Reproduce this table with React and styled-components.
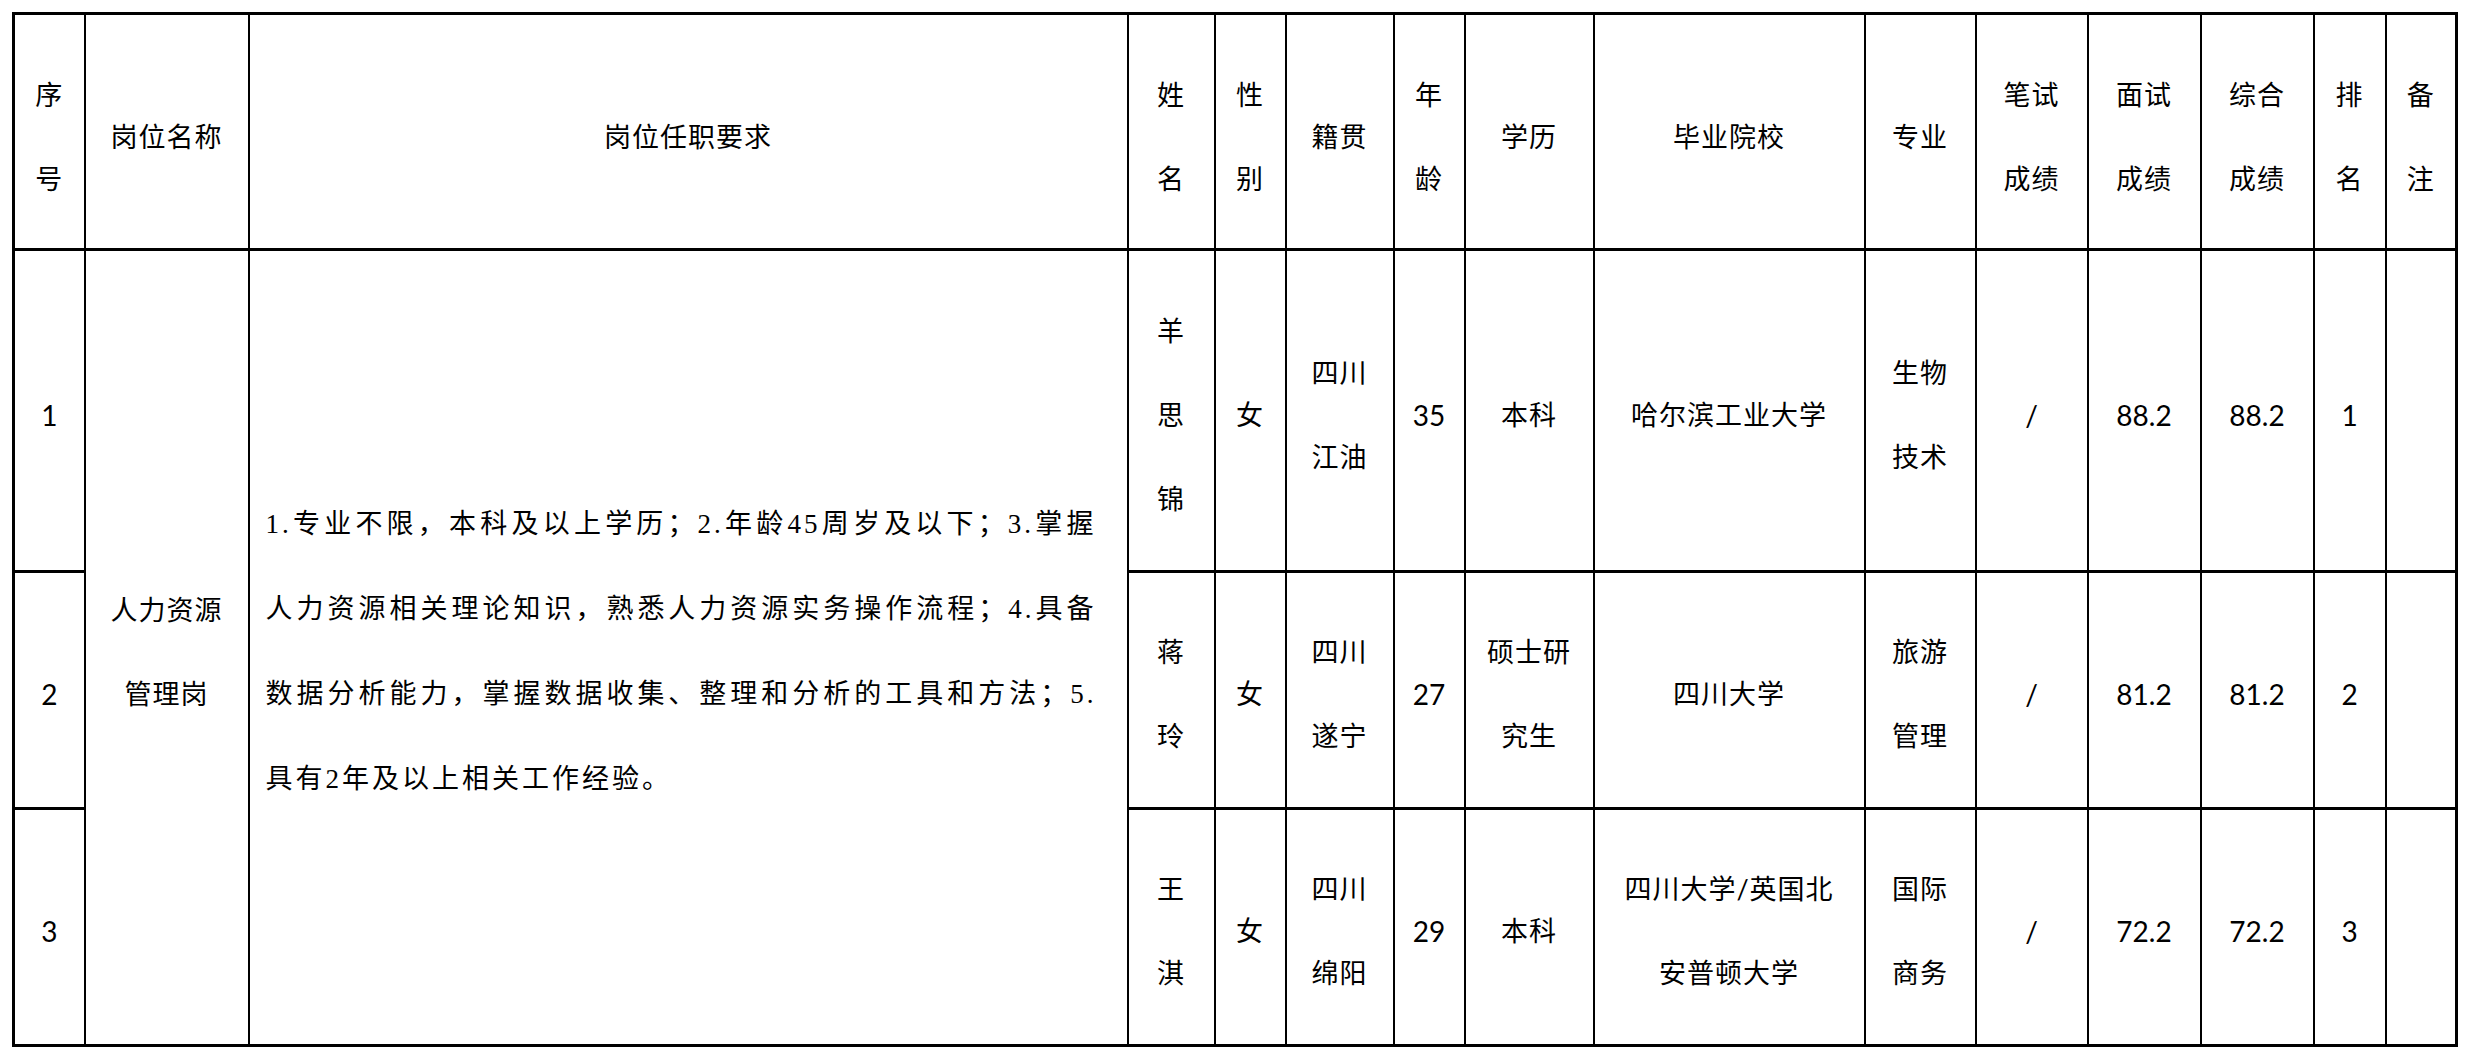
import styled, { createGlobalStyle } from "styled-components";

const GlobalStyle = createGlobalStyle`
  html, body {
    margin: 0;
    padding: 0;
    background: #fff;
  }
  body {
    font-family: "Noto Sans CJK SC", sans-serif;
    color: #000;
  }
`;

const cols = [71, 164, 879, 87, 71, 108, 71, 129, 271, 111, 112, 113, 113, 72, 71];

const head = [
  ["序", "号"],
  ["岗位名称"],
  ["岗位任职要求"],
  ["姓", "名"],
  ["性", "别"],
  ["籍贯"],
  ["年", "龄"],
  ["学历"],
  ["毕业院校"],
  ["专业"],
  ["笔试", "成绩"],
  ["面试", "成绩"],
  ["综合", "成绩"],
  ["排", "名"],
  ["备", "注"],
];

const people = [
  {
    no: "1",
    name: ["羊", "思", "锦"],
    sex: "女",
    origin: ["四川", "江油"],
    age: "35",
    edu: ["本科"],
    school: ["哈尔滨工业大学"],
    major: ["生物", "技术"],
    written: "/",
    interview: "88.2",
    total: "88.2",
    rank: "1",
    h: 322,
  },
  {
    no: "2",
    name: ["蒋", "玲"],
    sex: "女",
    origin: ["四川", "遂宁"],
    age: "27",
    edu: ["硕士研", "究生"],
    school: ["四川大学"],
    major: ["旅游", "管理"],
    written: "/",
    interview: "81.2",
    total: "81.2",
    rank: "2",
    h: 237,
  },
  {
    no: "3",
    name: ["王", "淇"],
    sex: "女",
    origin: ["四川", "绵阳"],
    age: "29",
    edu: ["本科"],
    school: ["四川大学/英国北", "安普顿大学"],
    major: ["国际", "商务"],
    written: "/",
    interview: "72.2",
    total: "72.2",
    rank: "3",
    h: 237,
  },
];

const requirement = [
  "1.专业不限，本科及以上学历；2.年龄45周岁及以下；3.掌握",
  "人力资源相关理论知识，熟悉人力资源实务操作流程；4.具备",
  "数据分析能力，掌握数据收集、整理和分析的工具和方法；5.",
  "具有2年及以上相关工作经验。",
];

function Lines({ items }) {
  return items.map((t, i) => <Line key={i}>{t}</Line>);
}

export default function App() {
  return (
    <Page>
      <GlobalStyle />
      <Sheet>
        <colgroup>
          {cols.map((w, i) => (
            <Col key={i} $w={w} />
          ))}
        </colgroup>
        <thead>
          <Row $h={236}>
            {head.map((h, i) => (
              <Th key={i}>
                <Lines items={h} />
              </Th>
            ))}
          </Row>
        </thead>
        <tbody>
          {people.map((p, i) => (
            <Row key={p.no} $h={p.h}>
              <Td $num>{p.no}</Td>
              {i === 0 && (
                <>
                  <Td rowSpan={3}>
                    <Lines items={["人力资源", "管理岗"]} />
                  </Td>
                  <Requirement rowSpan={3}>
                    {requirement.map((t, j) => (
                      <ReqLine key={j} $last={j === requirement.length - 1}>
                        {t}
                      </ReqLine>
                    ))}
                  </Requirement>
                </>
              )}
              <Td>
                <Lines items={p.name} />
              </Td>
              <Td>{p.sex}</Td>
              <Td>
                <Lines items={p.origin} />
              </Td>
              <Td $num>{p.age}</Td>
              <Td>
                <Lines items={p.edu} />
              </Td>
              <Td>
                <Lines items={p.school} />
              </Td>
              <Td>
                <Lines items={p.major} />
              </Td>
              <Td $num>{p.written}</Td>
              <Td $num>{p.interview}</Td>
              <Td $num>{p.total}</Td>
              <Td $num>{p.rank}</Td>
              <Td />
            </Row>
          ))}
        </tbody>
      </Sheet>
    </Page>
  );
}

const Page = styled.div`
  padding: 12px 9px 10px 12px;
`;

const Sheet = styled.table`
  width: 2443px;
  table-layout: fixed;
  border-collapse: collapse;
  border: 3px solid #000;
`;

const Col = styled.col`
  width: ${(p) => p.$w}px;
`;

const Row = styled.tr`
  height: ${(p) => p.$h}px;
`;

const cell = `
  border-left: 2px solid #000;
  border-right: 2px solid #000;
  border-top: 3px solid #000;
  border-bottom: 3px solid #000;
  text-align: center;
  vertical-align: middle;
  padding: 8px 0 0 0;
  font-weight: 400;
  font-size: 27px;
  line-height: 84px;
  letter-spacing: 1px;
  color: #000;
`;

const Th = styled.th`
  ${cell}
  font-family: "Noto Sans CJK SC", sans-serif;
`;

const Td = styled.td`
  ${cell}
  font-family: Lato, "Noto Sans CJK SC", sans-serif;
  font-size: ${(p) => (p.$num ? "28px" : "27px")};
  letter-spacing: ${(p) => (p.$num ? "0" : "1px")};
`;

const Line = styled.div`
  white-space: nowrap;
`;

const Requirement = styled.td`
  ${cell}
  text-align: left;
  padding: 8px 30px 0 16px;
  font-family: "Liberation Serif", "Noto Sans CJK SC", serif;
  font-size: 27px;
  letter-spacing: 3px;
`;

const ReqLine = styled.div`
  white-space: nowrap;
  text-align: ${(p) => (p.$last ? "left" : "justify")};
  text-align-last: ${(p) => (p.$last ? "left" : "justify")};
  line-height: 85px;
`;
